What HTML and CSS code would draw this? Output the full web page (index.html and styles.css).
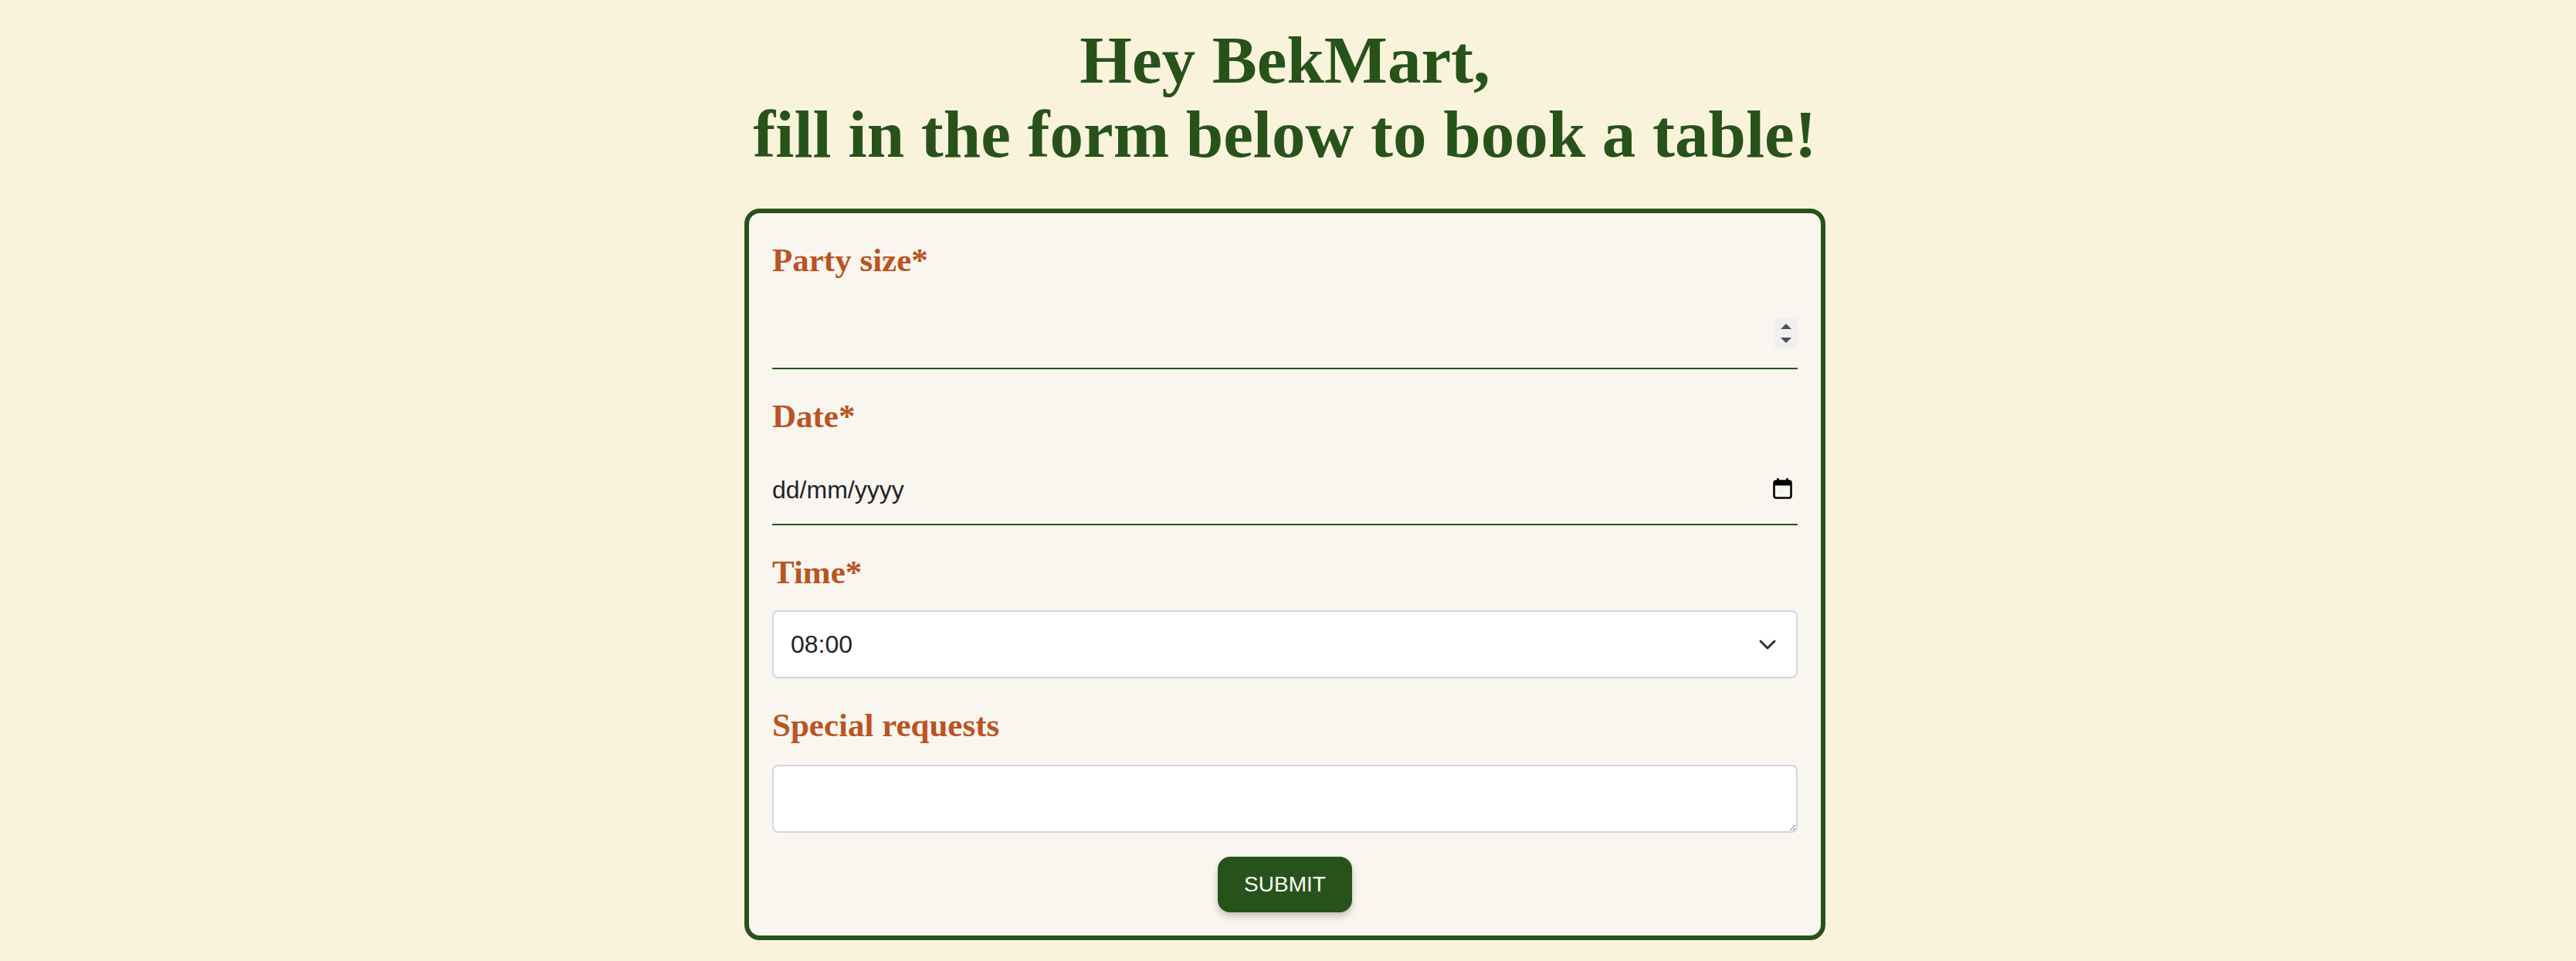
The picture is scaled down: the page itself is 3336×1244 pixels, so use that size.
FILE: index.html
```html
<!DOCTYPE html>
<html lang="en">
<head>
<meta charset="utf-8">
<title>Book a table</title>
<link rel="stylesheet" href="styles.css">
</head>
<body>
<main class="page">
  <h1 class="title">Hey BekMart,<br>fill in the form below to book a table!</h1>
  <form class="card">
    <div class="field">
      <label class="label" for="party">Party size*</label>
      <div class="control control-line">
        <input id="party" class="line-input" type="number">
        <span class="spinner" aria-hidden="true">
          <svg width="30" height="38" viewBox="0 0 30 38">
            <polygon points="8,14 15,7 22,14" fill="#4f4f4f"/>
            <polygon points="8,25 22,25 15,32" fill="#4f4f4f"/>
          </svg>
        </span>
      </div>
    </div>
    <div class="field">
      <label class="label" for="date">Date*</label>
      <div class="control control-line">
        <input id="date" class="line-input" type="text" placeholder="dd/mm/yyyy">
        <span class="calendar" aria-hidden="true">
          <svg width="25" height="28" viewBox="0 0 25 28">
            <rect x="1.5" y="4.5" width="22" height="22" rx="2.5" fill="none" stroke="#000" stroke-width="2.6"/>
            <rect x="1.5" y="4.5" width="22" height="6" fill="#000"/>
            <rect x="5" y="1" width="3" height="5" rx="1" fill="#000"/>
            <rect x="17" y="1" width="3" height="5" rx="1" fill="#000"/>
          </svg>
        </span>
      </div>
    </div>
    <div class="field">
      <label class="label" for="time">Time*</label>
      <div class="control control-select">
        <select id="time" class="select">
          <option>08:00</option>
          <option>09:00</option>
          <option>10:00</option>
        </select>
        <span class="chevron" aria-hidden="true">
          <svg width="22" height="13" viewBox="0 0 22 13">
            <path d="M2 2 L11 11 L20 2" fill="none" stroke="#2f3237" stroke-width="3" stroke-linecap="round" stroke-linejoin="round"/>
          </svg>
        </span>
      </div>
    </div>
    <div class="field">
      <label class="label" for="special">Special requests</label>
      <div class="control control-area">
        <textarea id="special" class="textarea"></textarea>
      </div>
    </div>
    <div class="actions">
      <button type="button" class="submit">SUBMIT</button>
    </div>
  </form>
</main>
</body>
</html>
```

FILE: styles.css
```css
html, body {
  margin: 0;
  padding: 0;
  background: #faf3dc;
}

.page {
  display: flex;
  flex-direction: column;
  align-items: center;
  padding: 30px 8px 8px 0;
  font-family: "Liberation Sans", Arial, sans-serif;
}

.title {
  margin: 0 0 48px 0;
  font-family: "Liberation Serif", "Times New Roman", serif;
  font-weight: 700;
  font-size: 87px;
  line-height: 96px;
  color: #27531a;
  text-align: center;
}

.card {
  box-sizing: border-box;
  width: 1400px;
  border: 6px solid #27531a;
  border-radius: 20px;
  background: #f9f6ef;
  padding: 30px;
  display: flex;
  flex-direction: column;
}

.label {
  display: block;
  font-family: "Liberation Serif", "Times New Roman", serif;
  font-weight: 700;
  font-size: 43px;
  line-height: 62px;
  color: #ba5422;
}

.field + .field { margin-top: 30px; }

.control {
  position: relative;
}

.control-line { margin-top: 20px; }
.control-select { margin-top: 18px; }
.control-area { margin-top: 20px; }

.line-input {
  box-sizing: border-box;
  display: block;
  width: 100%;
  height: 90px;
  margin: 0;
  padding: 0;
  border: none;
  border-bottom: 2px solid #27531a;
  background: transparent;
  font-family: "Liberation Sans", Arial, sans-serif;
  font-size: 32px;
  color: #1f2329;
  outline: none;
  -moz-appearance: textfield;
}

.line-input::-webkit-inner-spin-button,
.line-input::-webkit-outer-spin-button {
  -webkit-appearance: none;
  margin: 0;
}

.line-input::placeholder {
  color: #1f2329;
  opacity: 1;
}

.spinner {
  position: absolute;
  right: 0;
  top: 24px;
  width: 30px;
  height: 38px;
  background: #efefef;
  display: flex;
}

.calendar {
  position: absolute;
  right: 7px;
  top: 28px;
  width: 25px;
  height: 28px;
  display: flex;
}

.select {
  box-sizing: border-box;
  display: block;
  width: 100%;
  height: 88px;
  margin: 0;
  padding: 0 60px 0 22px;
  border: 2px solid #d1d5db;
  border-radius: 8px;
  background: #ffffff;
  font-family: "Liberation Sans", Arial, sans-serif;
  font-size: 32px;
  color: #1f2329;
  -webkit-appearance: none;
  appearance: none;
  outline: none;
}

.chevron {
  position: absolute;
  right: 28px;
  top: 38px;
  width: 22px;
  height: 13px;
  display: flex;
  pointer-events: none;
}

.textarea {
  box-sizing: border-box;
  display: block;
  width: 100%;
  height: 88px;
  margin: 0;
  padding: 12px 22px;
  border: 2px solid #d1d5db;
  border-radius: 8px;
  background: #ffffff;
  font-family: "Liberation Sans", Arial, sans-serif;
  font-size: 32px;
  color: #1f2329;
  outline: none;
}

.actions {
  display: flex;
  justify-content: center;
  margin-top: 31px;
}

.submit {
  box-sizing: border-box;
  height: 72px;
  padding: 0 34px;
  border: none;
  border-radius: 16px;
  background: #27531a;
  color: #ffffff;
  font-family: "Liberation Sans", Arial, sans-serif;
  font-size: 28px;
  line-height: 72px;
  box-shadow: 0 5px 8px rgba(0, 0, 0, 0.22);
  cursor: pointer;
}
```
